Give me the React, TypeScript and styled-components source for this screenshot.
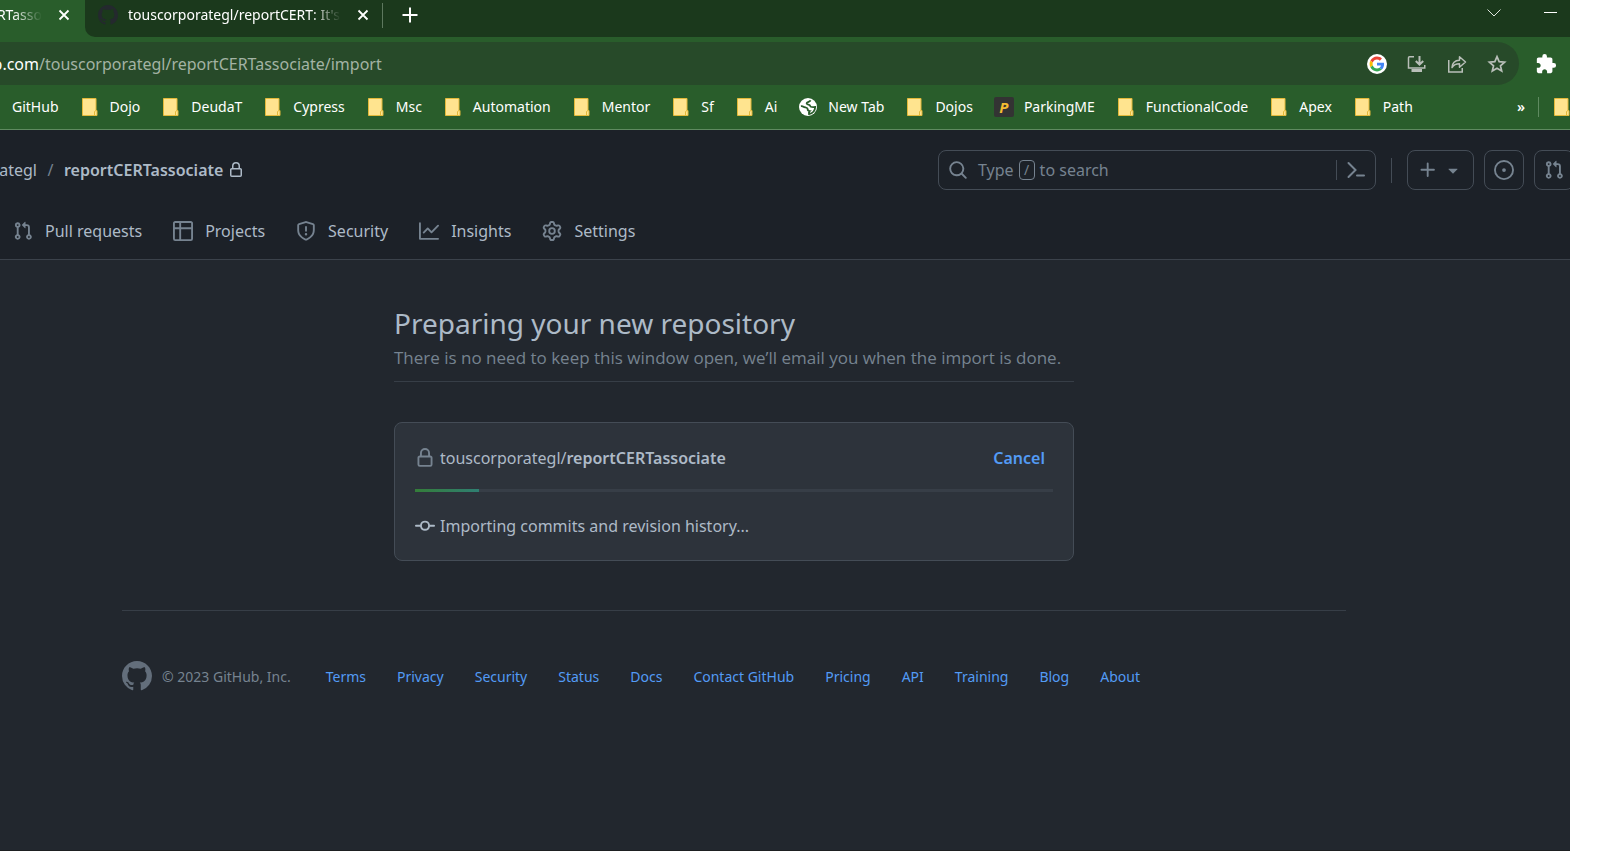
import React from 'react';
import styled, { createGlobalStyle } from 'styled-components';

const GlobalStyle = createGlobalStyle`
  *, *::before, *::after { box-sizing: border-box; }
  body {
    margin: 0;
    background: #ffffff;
    font-family: "Noto Sans", "Open Sans", sans-serif;
    font-size: 16px;
  }
  button { font: inherit; color: inherit; background: none; border: 0; padding: 0; cursor: pointer; }
  a { color: inherit; text-decoration: none; }
  svg { display: block; flex: none; }
`;

/* ---------- icons ---------- */

const octicons = {
  lock: 'M4 4a4 4 0 0 1 8 0v2h.25c.966 0 1.75.784 1.75 1.75v5.5A1.75 1.75 0 0 1 12.25 15h-8.5A1.75 1.75 0 0 1 2 13.25v-5.5C2 6.784 2.784 6 3.75 6H4Zm8.25 3.5h-8.5a.25.25 0 0 0-.25.25v5.5c0 .138.112.25.25.25h8.5a.25.25 0 0 0 .25-.25v-5.5a.25.25 0 0 0-.25-.25ZM10.5 6V4a2.5 2.5 0 1 0-5 0v2Z',
  pull: 'M1.5 3.25a2.25 2.25 0 1 1 3 2.122v5.256a2.251 2.251 0 1 1-1.5 0V5.372A2.25 2.25 0 0 1 1.5 3.25Zm5.677-.177L9.573.677A.25.25 0 0 1 10 .854V2.5h1A2.5 2.5 0 0 1 13.5 5v5.628a2.251 2.251 0 1 1-1.5 0V5a1 1 0 0 0-1-1h-1v1.646a.25.25 0 0 1-.427.177L7.177 3.427a.25.25 0 0 1 0-.354ZM3.75 2.5a.75.75 0 1 0 0 1.5.75.75 0 0 0 0-1.5Zm0 9.5a.75.75 0 1 0 0 1.5.75.75 0 0 0 0-1.5Zm8.25.75a.75.75 0 1 0 1.5 0 .75.75 0 0 0-1.5 0Z',
  table: 'M0 1.75C0 .784.784 0 1.75 0h12.5C15.216 0 16 .784 16 1.75v12.5A1.75 1.75 0 0 1 14.25 16H1.75A1.75 1.75 0 0 1 0 14.25ZM6.5 6.5v8h7.75a.25.25 0 0 0 .25-.25V6.5Zm8-1.5V1.75a.25.25 0 0 0-.25-.25H6.5V5Zm-13 1.5v7.75c0 .138.112.25.25.25H5v-8ZM5 5V1.5H1.75a.25.25 0 0 0-.25.25V5Z',
  shield: 'M7.467.133a1.748 1.748 0 0 1 1.066 0l5.25 1.68A1.75 1.75 0 0 1 15 3.48V7c0 1.566-.32 3.182-1.303 4.682-.983 1.498-2.585 2.813-5.032 3.855a1.697 1.697 0 0 1-1.33 0c-2.447-1.042-4.049-2.357-5.032-3.855C1.32 10.182 1 8.566 1 7V3.48a1.75 1.75 0 0 1 1.217-1.667Zm.61 1.429a.25.25 0 0 0-.153 0l-5.25 1.68a.25.25 0 0 0-.174.238V7c0 1.358.275 2.666 1.057 3.86.784 1.194 2.121 2.34 4.366 3.297a.196.196 0 0 0 .154 0c2.245-.956 3.582-2.104 4.366-3.298C13.225 9.666 13.5 8.36 13.5 7V3.48a.251.251 0 0 0-.174-.237l-5.25-1.68ZM8.75 4.75v3a.75.75 0 0 1-1.5 0v-3a.75.75 0 0 1 1.5 0ZM9 10.5a1 1 0 1 1-2 0 1 1 0 0 1 2 0Z',
  graph: 'M1.5 1.75V13.5h13.75a.75.75 0 0 1 0 1.5H.75a.75.75 0 0 1-.75-.75V1.75a.75.75 0 0 1 1.5 0Zm14.28 2.53-5.25 5.25a.75.75 0 0 1-1.06 0L7 7.06 4.28 9.78a.751.751 0 0 1-1.06-1.06l3.25-3.25a.75.75 0 0 1 1.06 0L10 7.94l4.72-4.72a.751.751 0 0 1 1.06 1.06Z',
  gear: 'M8 0a8.2 8.2 0 0 1 .701.031C9.444.095 9.99.645 10.16 1.29l.288 1.107c.018.066.079.158.212.224.231.114.454.243.668.386.123.082.233.09.299.071l1.103-.303c.644-.176 1.392.021 1.82.63.27.385.506.792.704 1.218.315.675.111 1.422-.364 1.891l-.814.806c-.049.048-.098.147-.088.294.016.257.016.515 0 .772-.01.147.038.246.088.294l.814.806c.475.469.679 1.216.364 1.891a7.977 7.977 0 0 1-.704 1.217c-.428.61-1.176.807-1.82.63l-1.102-.302c-.067-.019-.177-.011-.3.071a5.909 5.909 0 0 1-.668.386c-.133.066-.194.158-.211.224l-.29 1.106c-.168.646-.715 1.196-1.458 1.26a8.006 8.006 0 0 1-1.402 0c-.743-.064-1.289-.614-1.458-1.26l-.289-1.106c-.018-.066-.079-.158-.212-.224a5.738 5.738 0 0 1-.668-.386c-.123-.082-.233-.09-.299-.071l-1.103.303c-.644.176-1.392-.021-1.82-.63a8.12 8.12 0 0 1-.704-1.218c-.315-.675-.111-1.422.363-1.891l.815-.806c.05-.048.098-.147.088-.294a6.214 6.214 0 0 1 0-.772c.01-.147-.038-.246-.088-.294l-.815-.806C.635 6.045.431 5.298.746 4.623a7.92 7.92 0 0 1 .704-1.217c.428-.61 1.176-.807 1.82-.63l1.102.302c.067.019.177.011.3-.071.214-.143.437-.272.668-.386.133-.066.194-.158.211-.224l.29-1.106C6.009.645 6.556.095 7.299.03 7.53.01 7.764 0 8 0Zm-.571 1.525c-.036.003-.108.036-.137.146l-.289 1.105c-.147.561-.549.967-.998 1.189-.173.086-.34.183-.5.29-.417.278-.97.423-1.529.27l-1.103-.303c-.109-.03-.175.016-.195.045-.22.312-.412.644-.573.99-.014.031-.021.11.059.19l.815.806c.411.406.562.957.53 1.456a4.709 4.709 0 0 0 0 .582c.032.499-.119 1.05-.53 1.456l-.815.806c-.081.08-.073.159-.059.19.162.346.353.677.573.989.02.03.085.076.195.046l1.102-.303c.56-.153 1.113-.008 1.53.27.161.107.328.204.501.29.447.222.85.629.997 1.189l.289 1.105c.029.109.101.143.137.146a6.6 6.6 0 0 0 1.142 0c.036-.003.108-.036.137-.146l.289-1.105c.147-.561.549-.967.998-1.189.173-.086.34-.183.5-.29.417-.278.97-.423 1.529-.27l1.103.303c.109.029.175-.016.195-.045.22-.313.411-.644.573-.99.014-.031.021-.11-.059-.19l-.815-.806c-.411-.406-.562-.957-.53-1.456a4.709 4.709 0 0 0 0-.582c-.032-.499.119-1.05.53-1.456l.815-.806c.081-.08.073-.159.059-.19a6.464 6.464 0 0 0-.573-.989c-.02-.03-.085-.076-.195-.046l-1.102.303c-.56.153-1.113.008-1.53-.27a4.44 4.44 0 0 0-.501-.29c-.447-.222-.85-.629-.997-1.189l-.289-1.105c-.029-.11-.101-.143-.137-.146a6.6 6.6 0 0 0-1.142 0ZM11 8a3 3 0 1 1-6 0 3 3 0 0 1 6 0ZM9.5 8a1.5 1.5 0 1 0-3.001.001A1.5 1.5 0 0 0 9.5 8Z',
  search: 'M10.68 11.74a6 6 0 0 1-7.922-8.982 6 6 0 0 1 8.982 7.922l3.04 3.04a.749.749 0 1 1-1.06 1.06ZM11.5 7a4.499 4.499 0 1 0-8.997 0A4.499 4.499 0 0 0 11.5 7Z',
  plus: 'M7.75 2a.75.75 0 0 1 .75.75V7h4.25a.75.75 0 0 1 0 1.5H8.5v4.25a.75.75 0 0 1-1.5 0V8.5H2.75a.75.75 0 0 1 0-1.5H7V2.75A.75.75 0 0 1 7.75 2Z',
  caret: 'm4.427 7.427 3.396 3.396a.25.25 0 0 0 .354 0l3.396-3.396A.25.25 0 0 0 11.396 7H4.604a.25.25 0 0 0-.177.427Z',
  issue: 'M8 9.5a1.5 1.5 0 1 0 0-3 1.5 1.5 0 0 0 0 3ZM8 0a8 8 0 1 1 0 16A8 8 0 0 1 8 0ZM1.5 8a6.5 6.5 0 1 0 13 0 6.5 6.5 0 0 0-13 0Z',
  commit: 'M11.93 8.5a4.002 4.002 0 0 1-7.86 0H.75a.75.75 0 0 1 0-1.5h3.32a4.002 4.002 0 0 1 7.86 0h3.32a.75.75 0 0 1 0 1.5Zm-1.43-.75a2.5 2.5 0 1 0-5 0 2.5 2.5 0 0 0 5 0Z',
  mark: 'M8 0c4.42 0 8 3.58 8 8a8.013 8.013 0 0 1-5.45 7.59c-.4.08-.55-.17-.55-.38 0-.27.01-1.13.01-2.2 0-.75-.25-1.23-.54-1.48 1.78-.2 3.65-.88 3.65-3.95 0-.88-.31-1.59-.82-2.15.08-.2.36-1.02-.08-2.12 0 0-.67-.22-2.2.82-.64-.18-1.32-.27-2-.27-.68 0-1.36.09-2 .27-1.53-1.03-2.2-.82-2.2-.82-.44 1.1-.16 1.92-.08 2.12-.51.56-.82 1.28-.82 2.15 0 3.06 1.86 3.75 3.64 3.95-.23.2-.44.55-.51 1.07-.46.21-1.61.55-2.33-.66-.15-.24-.6-.83-1.23-.82-.67.01-.27.38.01.53.34.19.73.9.82 1.13.16.45.68 1.31 2.69.94 0 .67.01 1.3.01 1.49 0 .21-.15.45-.55.38A7.995 7.995 0 0 1 0 8c0-4.42 3.58-8 8-8Z',
};

type OcticonName = keyof typeof octicons;

const Octicon = ({ name, size = 20 }: { name: OcticonName; size?: number }) => (
  <svg width={size} height={size} viewBox="0 0 16 16" fill="currentColor" aria-hidden="true">
    <path fillRule="evenodd" d={octicons[name]} />
  </svg>
);

const CloseIcon = () => (
  <svg width="12" height="12" viewBox="0 0 12 12" stroke="#fff" strokeWidth="1.8" aria-hidden="true">
    <path d="M1.5 1.5l9 9M10.5 1.5l-9 9" />
  </svg>
);

const PlusIcon = () => (
  <svg width="16" height="16" viewBox="0 0 16 16" stroke="#fff" strokeWidth="2" aria-hidden="true">
    <path d="M8 .5v15M.5 8h15" />
  </svg>
);

const ChevronIcon = () => (
  <svg width="14" height="8" viewBox="0 0 14 8" stroke="#dfe6df" fill="none" aria-hidden="true">
    <path d="M.5.5L7 7l6.5-6.5" />
  </svg>
);

const MinimiseIcon = () => (
  <svg width="13" height="1" viewBox="0 0 13 1" aria-hidden="true">
    <path d="M0 0h13v1H0z" fill="#fff" />
  </svg>
);

const GoogleIcon = () => (
  <svg width="20" height="20" viewBox="0 0 20 20" aria-hidden="true">
    <circle cx="10" cy="10" r="10" fill="#fff" />
    <g transform="translate(2.6 2.6) scale(.308)">
      <path fill="#EA4335" d="M24 9.5c3.54 0 6.71 1.22 9.21 3.6l6.85-6.85C35.9 2.38 30.47 0 24 0 14.62 0 6.51 5.38 2.56 13.22l7.98 6.19C12.43 13.72 17.74 9.5 24 9.5z" />
      <path fill="#4285F4" d="M46.98 24.55c0-1.57-.15-3.09-.38-4.55H24v9.02h12.94c-.58 2.96-2.26 5.48-4.78 7.18l7.73 6c4.51-4.18 7.09-10.36 7.09-17.65z" />
      <path fill="#FBBC05" d="M10.53 28.59c-.48-1.45-.76-2.99-.76-4.59s.27-3.14.76-4.59l-7.98-6.19C.92 16.46 0 20.12 0 24c0 3.88.92 7.54 2.56 10.78l7.97-6.19z" />
      <path fill="#34A853" d="M24 48c6.48 0 11.93-2.13 15.89-5.81l-7.73-6c-2.15 1.45-4.92 2.3-8.16 2.3-6.26 0-11.57-4.22-13.47-9.91l-7.98 6.19C6.51 42.62 14.62 48 24 48z" />
    </g>
  </svg>
);

const InstallIcon = () => (
  <svg width="20" height="20" viewBox="0 0 20 20" fill="none" stroke="currentColor" strokeWidth="1.5" aria-hidden="true">
    <path d="M7 2.75H2.500a1 1 0 0 0-1 1V14h16.250v-3" />
    <path d="M12.5 2v8M8.800 7l3.700 3.700L16.200 7" strokeWidth="2" />
    <path d="M4.500 16.500h10.500" strokeWidth="3" />
  </svg>
);

const ShareIcon = () => (
  <svg width="20" height="20" viewBox="0 0 20 20" fill="none" stroke="currentColor" strokeWidth="1.5" aria-hidden="true">
    <path d="M1.75 6v12h13.5v-4" />
    <path d="M5 13.5c.3-5 3-7 7.5-7.2V2.8L18.500 8l-6 5.200V9.800c-3.500 0-5.800 1-7.500 3.700z" strokeLinejoin="round" />
  </svg>
);

const StarIcon = () => (
  <svg width="20" height="20" viewBox="0 0 20 20" fill="none" stroke="currentColor" strokeWidth="1.7" aria-hidden="true">
    <path d="M10 2.6l2.15 5.1 5.45.45-4.150 3.600 1.270 5.350L10 14.250 5.280 17.100l1.270-5.350-4.150-3.600 5.450-.45z" />
  </svg>
);

const PuzzleIcon = () => (
  <svg width="22" height="22" viewBox="0 0 24 24" fill="#fff" aria-hidden="true">
    <path d="M20.5 11H19V7c0-1.100-.9-2-2-2h-4V3.500a2.500 2.500 0 0 0-5 0V5H4c-1.100 0-1.990.9-1.990 2v3.800H3.500c1.490 0 2.700 1.210 2.700 2.700s-1.210 2.700-2.700 2.700H2V20c0 1.100.9 2 2 2h3.800v-1.500c0-1.490 1.210-2.700 2.700-2.700s2.700 1.210 2.700 2.700V22H17c1.100 0 2-.9 2-2v-4h1.500a2.500 2.500 0 0 0 0-5z" />
  </svg>
);

const FolderIcon = () => (
  <svg width="20" height="20" viewBox="0 0 20 20" aria-hidden="true">
    <path d="M2.5 1.500h13.500v12h1v5H2.500z" fill="#ffe48f" stroke="#e3b93a" />
    <path d="M14.5 18.500v-4l1.500-1" fill="none" stroke="#e3b93a" />
  </svg>
);

const GlobeIcon = () => (
  <svg width="20" height="20" viewBox="0 0 20 20" aria-hidden="true">
    <circle cx="10" cy="10" r="9" fill="#fff" />
    <path d="M12.500 3.200c-.4 1.900-3.800 1.300-3.900 3.200-.1 1.700 3.300.9 3.700 2.700.3 1.300 1.700 1 4.900.9-.2 3.700-2.700 6.500-6.200 7-.3-1.300-.2-2.200.7-2.900-1.300-.2-2.200-1-2.100-2.200C9.500 10.300 6.800 10.600 5.500 9.700c-.9-.6-1.700-.6-2.600-.5" fill="none" stroke="#285c2a" strokeWidth="1.800" />
  </svg>
);

const ParkingBadge = styled.span`
  width: 20px;
  height: 20px;
  border-radius: 2px;
  background: #333333;
  color: #f5bc32;
  font: italic 700 15px/20px "Noto Sans", sans-serif;
  text-align: center;
`;

const ConsoleIcon = () => (
  <svg width="20" height="20" viewBox="0 0 20 20" fill="none" stroke="currentColor" strokeWidth="2" strokeLinecap="round" aria-hidden="true">
    <path d="M2.5 3l7 7-7 7M11 15.5h7" />
  </svg>
);

/* ---------- browser frame ---------- */

const Window = styled.div`
  display: flex;
  flex-direction: column;
  min-height: 100vh;
  margin-right: 53px;
  overflow: hidden;
  background: #22272e;
  border-bottom: 1px solid #1d1f21;
`;

const TabStrip = styled.div`
  display: flex;
  height: 37px;
  background: #295d2b;
  color: #ffffff;
  font-size: 14px;
  line-height: 30px;
`;

const ActiveTab = styled.div`
  display: flex;
  align-items: center;
  gap: 16px;
  width: 85px;
  height: 30px;
`;

const InactiveTabs = styled.div`
  display: flex;
  flex: 1;
  background: #1b391c;
  border-bottom-left-radius: 10px;
`;

const Tab = styled.div`
  display: flex;
  align-items: center;
  height: 30px;
  padding: 0 13px;
`;

const TabDivider = styled.span`
  width: 1px;
  height: 25px;
  margin-top: 3px;
  background: #5d785e;
`;

const TabTitle = styled.span<{ $width: number; $end?: boolean }>`
  display: flex;
  justify-content: ${p => (p.$end ? 'flex-end' : 'flex-start')};
  width: ${p => p.$width}px;
  overflow: hidden;
  white-space: nowrap;
  mask-image: linear-gradient(to right, #000 calc(100% - 30px), transparent);
`;

const Favicon = styled.span`
  margin-right: 10px;
  color: #24292e;
`;

const IconButton = styled.button`
  display: flex;
  align-items: center;
  justify-content: center;
`;

const CloseTab = styled(IconButton)`
  margin-left: 16px;
`;

const NewTab = styled(IconButton)`
  width: 54px;
  height: 30px;
`;

const WindowControls = styled.div`
  display: flex;
  align-items: center;
  gap: 43px;
  height: 25px;
  margin-left: auto;
  padding-right: 13px;
`;

const AddressRow = styled.div`
  display: flex;
  align-items: center;
  padding-top: 5px;
  background: #295d2b;
`;

const AddressBar = styled.div`
  display: flex;
  flex: 1;
  align-items: center;
  height: 43px;
  padding-right: 12px;
  border-radius: 0 22px 22px 0;
  background: #274a29;
  color: #a3b3a4;
`;

const Host = styled.span`
  display: flex;
  justify-content: flex-end;
  width: 39px;
  overflow: hidden;
  color: #ffffff;
`;

const AddressActions = styled.div`
  display: flex;
  gap: 20px;
  margin-left: auto;
  color: #b9bfb9;
`;

const Extensions = styled(IconButton)`
  width: 51px;
  padding-left: 3px;
`;

const Bookmarks = styled.nav`
  display: flex;
  align-items: center;
  gap: 21px;
  height: 45px;
  padding-left: 12px;
  border-bottom: 1px solid #5f8a60;
  background: #295d2b;
  color: #ffffff;
  font-size: 14px;
  white-space: nowrap;
`;

const Bookmark = styled.a`
  display: flex;
  align-items: center;
  gap: 10px;
`;

const BookmarkLabel = styled.span`
  padding-bottom: 2px;
`;

const BookmarkOverflow = styled.div`
  display: flex;
  align-items: center;
  gap: 13px;
  margin-left: auto;
  margin-right: -2px;
`;

const MoreBookmarks = styled(IconButton)`
  padding-bottom: 2px;
  font-weight: 600;
`;

const BookmarkDivider = styled.span`
  width: 1px;
  height: 20px;
  background: #5f8a60;
`;

/* ---------- repository header ---------- */

const Header = styled.header`
  padding-top: 20px;
  border-bottom: 1px solid #3b424b;
  background: #1c2128;
  color: #adbac7;
`;

const HeaderTop = styled.div`
  display: flex;
  align-items: center;
  height: 40px;
  margin-right: -4px;
`;

const Owner = styled.a`
  display: flex;
  justify-content: flex-end;
  width: 37px;
  overflow: hidden;
`;

const Slash = styled.span`
  width: 27px;
  text-align: center;
  color: #768390;
`;

const RepoName = styled.a`
  margin-right: 5px;
  font-weight: 600;
`;

const HeaderActions = styled.div`
  display: flex;
  gap: 10px;
  margin-left: auto;
  color: #768390;
`;

const Search = styled.div`
  display: flex;
  align-items: center;
  width: 438px;
  height: 40px;
  margin-right: 5px;
  border: 1px solid #444c56;
  border-radius: 8px;
`;

const SearchButton = styled.button`
  display: flex;
  flex: 1;
  align-items: center;
  gap: 5px;
  padding-left: 9px;
`;

const SearchLabel = styled.span`
  margin-left: 5px;
`;

const Key = styled.kbd`
  width: 16px;
  height: 20px;
  border: 1px solid #768390;
  border-radius: 4px;
  font: 14px/18px "Noto Sans", sans-serif;
  text-align: center;
`;

const Command = styled(IconButton)`
  width: 39px;
  height: 20px;
  border-left: 1px solid #444c56;
`;

const ActionDivider = styled.span`
  align-self: center;
  width: 1px;
  height: 25px;
  margin-right: 5px;
  background: #444c56;
`;

const ActionButton = styled(IconButton)<{ $width?: number }>`
  gap: 5px;
  width: ${p => p.$width ?? 40}px;
  height: 40px;
  border: 1px solid #444c56;
  border-radius: 8px;
`;

const RepoNav = styled.nav`
  display: flex;
  gap: 31px;
  padding: 21px 13px 8px;
`;

const RepoNavLink = styled.a`
  display: flex;
  align-items: center;
  gap: 12px;
  height: 40px;

  svg { color: #768390; }
`;

/* ---------- page content ---------- */

const Content = styled.div`
  margin-right: 102px;
  padding: 42px 20px 50px;
  color: #adbac7;
`;

const Main = styled.main`
  max-width: 680px;
  margin: 0 auto 49px;
`;

const Title = styled.h1`
  margin: 0;
  font-size: 28px;
  font-weight: 400;
  line-height: 42px;
`;

const Lead = styled.p`
  margin: 0 0 40px;
  padding-bottom: 9px;
  border-bottom: 1px solid #373e47;
  color: #768390;
  font-family: "Open Sans", "Noto Sans", sans-serif;
  font-size: 17px;
  line-height: 28px;
`;

const Card = styled.section`
  padding: 20px;
  border: 1px solid #444c56;
  border-radius: 8px;
  background: #2d333b;
`;

const CardRow = styled.div`
  display: flex;
  align-items: center;
  gap: 5px;
  line-height: 28px;
`;

const Muted = styled.span`
  color: #768390;
`;

const Strong = styled.strong`
  font-weight: 600;
`;

const CancelButton = styled.button`
  margin-left: auto;
  padding: 1px 8px 0;
  color: #539bf5;
  font-weight: 600;
`;

const Progress = styled.div`
  height: 3px;
  margin: 17px 0 20px;
  background: #373e47;
`;

const ProgressFill = styled.div`
  height: 3px;
  background: linear-gradient(to right, #347d39, #2f7f72);
`;

const Footer = styled.footer`
  display: flex;
  align-items: center;
  gap: 35px;
  max-width: 1224px;
  margin: 0 auto;
  padding-top: 50px;
  border-top: 1px solid #373e47;
  color: #768390;
  font-size: 14px;
  white-space: nowrap;
`;

const Copyright = styled.div`
  display: flex;
  align-items: center;
  gap: 10px;

  svg { color: #636e7b; }
`;

const FooterLinks = styled.nav`
  display: flex;
  gap: 31px;
  color: #539bf5;
`;

const bookmarks = [
  'Dojo', 'DeudaT', 'Cypress', 'Msc', 'Automation', 'Mentor', 'Sf', 'Ai',
  'New Tab', 'Dojos', 'ParkingME', 'FunctionalCode', 'Apex', 'Path',
];

const navItems: { icon: OcticonName; label: string }[] = [
  { icon: 'pull', label: 'Pull requests' },
  { icon: 'table', label: 'Projects' },
  { icon: 'shield', label: 'Security' },
  { icon: 'graph', label: 'Insights' },
  { icon: 'gear', label: 'Settings' },
];

const footerLinks = [
  'Terms', 'Privacy', 'Security', 'Status', 'Docs', 'Contact GitHub',
  'Pricing', 'API', 'Training', 'Blog', 'About',
];

const BookmarkIcon = ({ label }: { label: string }) => {
  if (label === 'New Tab') return <GlobeIcon />;
  if (label === 'ParkingME') return <ParkingBadge aria-hidden="true">P</ParkingBadge>;
  return <FolderIcon />;
};

export default function App() {
  const progress = 10;

  return (
    <Window>
      <GlobalStyle />
      <TabStrip>
        <ActiveTab>
          <TabTitle $width={42} $end>RTasso</TabTitle>
          <IconButton aria-label="Close tab"><CloseIcon /></IconButton>
        </ActiveTab>
        <InactiveTabs>
          <Tab>
            <Favicon><Octicon name="mark" /></Favicon>
            <TabTitle $width={213}>touscorporategl/reportCERT: It's</TabTitle>
            <CloseTab aria-label="Close tab"><CloseIcon /></CloseTab>
          </Tab>
          <TabDivider />
          <NewTab aria-label="New tab"><PlusIcon /></NewTab>
          <WindowControls>
            <IconButton aria-label="Search tabs"><ChevronIcon /></IconButton>
            <IconButton aria-label="Minimise"><MinimiseIcon /></IconButton>
          </WindowControls>
        </InactiveTabs>
      </TabStrip>

      <AddressRow>
        <AddressBar>
          <Host>b.com</Host>
          <span>/touscorporategl/reportCERTassociate/import</span>
          <AddressActions>
            <IconButton aria-label="Google"><GoogleIcon /></IconButton>
            <IconButton aria-label="Install"><InstallIcon /></IconButton>
            <IconButton aria-label="Share"><ShareIcon /></IconButton>
            <IconButton aria-label="Bookmark"><StarIcon /></IconButton>
          </AddressActions>
        </AddressBar>
        <Extensions aria-label="Extensions"><PuzzleIcon /></Extensions>
      </AddressRow>

      <Bookmarks aria-label="Bookmarks">
        <Bookmark href="#"><BookmarkLabel>GitHub</BookmarkLabel></Bookmark>
        {bookmarks.map(label => (
          <Bookmark href="#" key={label}>
            <BookmarkIcon label={label} />
            <BookmarkLabel>{label}</BookmarkLabel>
          </Bookmark>
        ))}
        <BookmarkOverflow>
          <MoreBookmarks aria-label="More bookmarks">»</MoreBookmarks>
          <BookmarkDivider />
          <FolderIcon />
        </BookmarkOverflow>
      </Bookmarks>

      <Header>
        <HeaderTop>
          <Owner href="#">ategl</Owner>
          <Slash>/</Slash>
          <RepoName href="#">reportCERTassociate</RepoName>
          <Octicon name="lock" size={16} />
          <HeaderActions>
            <Search>
              <SearchButton>
                <Octicon name="search" />
                <SearchLabel>Type</SearchLabel>
                <Key>/</Key>
                <span>to search</span>
              </SearchButton>
              <Command aria-label="Command palette"><ConsoleIcon /></Command>
            </Search>
            <ActionDivider />
            <ActionButton $width={67} aria-label="Create new">
              <Octicon name="plus" />
              <Octicon name="caret" />
            </ActionButton>
            <ActionButton aria-label="Issues"><Octicon name="issue" /></ActionButton>
            <ActionButton aria-label="Pull requests"><Octicon name="pull" /></ActionButton>
          </HeaderActions>
        </HeaderTop>
        <RepoNav aria-label="Repository">
          {navItems.map(item => (
            <RepoNavLink href="#" key={item.label}>
              <Octicon name={item.icon} />
              {item.label}
            </RepoNavLink>
          ))}
        </RepoNav>
      </Header>

      <Content>
        <Main>
          <Title>Preparing your new repository</Title>
          <Lead>There is no need to keep this window open, we’ll email you when the import is done.</Lead>
          <Card>
            <CardRow>
              <Muted><Octicon name="lock" /></Muted>
              <span>touscorporategl/<Strong>reportCERTassociate</Strong></span>
              <CancelButton>Cancel</CancelButton>
            </CardRow>
            <Progress role="progressbar" aria-label="Import progress" aria-valuenow={progress}>
              <ProgressFill style={{ width: `${progress}%` }} />
            </Progress>
            <CardRow>
              <Octicon name="commit" />
              <span>Importing commits and revision history...</span>
            </CardRow>
          </Card>
        </Main>
        <Footer>
          <Copyright>
            <Octicon name="mark" size={30} />
            <span>© 2023 GitHub, Inc.</span>
          </Copyright>
          <FooterLinks aria-label="Footer">
            {footerLinks.map(label => <a href="#" key={label}>{label}</a>)}
          </FooterLinks>
        </Footer>
      </Content>
    </Window>
  );
}
